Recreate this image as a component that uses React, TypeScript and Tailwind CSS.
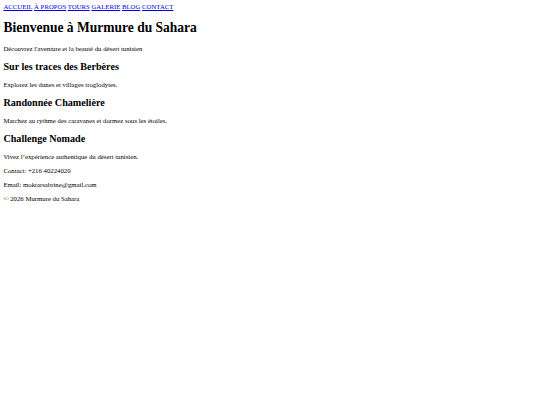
const links = ["ACCUEIL", "À PROPOS", "TOURS", "GALERIE", "BLOG", "CONTACT"];

const sections = [
  { title: "Sur les traces des Berbères", text: "Explorez les dunes et villages troglodytes." },
  { title: "Randonnée Chamelière", text: "Marchez au rythme des caravanes et dormez sous les étoiles." },
  { title: "Challenge Nomade", text: "Vivez l’expérience authentique du désert tunisien." },
];

export default function App() {
  return (
    <div className="min-h-[405px] bg-white text-black font-['Liberation_Serif','Times_New_Roman',serif] text-[6.76px] leading-[1.15]">
      <div className="p-[3.38px]">
        <nav>
          {links.map((l, i) => (
            <span key={l}>
              <a href="#" className="text-[#0000ee] underline">
                {l}
              </a>
              {i < links.length - 1 ? " " : ""}
            </span>
          ))}
        </nav>
        <h1 className="text-[13.52px] font-bold my-[9.06px]">Bienvenue à Murmure du Sahara</h1>
        <p className="my-[6.76px]">Découvrez l'aventure et la beauté du désert tunisien</p>
        {sections.map((s) => (
          <section key={s.title}>
            <h2 className="text-[10.14px] font-bold my-[8.25px]">{s.title}</h2>
            <p className="my-[6.76px]">{s.text}</p>
          </section>
        ))}
        <footer>
          <p className="my-[6.2px]">Contact: +216 40224020</p>
          <p className="my-[6.2px]">Email: moktarsabrine@gmail.com</p>
          <p className="my-[6.2px]">© 2026 Murmure du Sahara</p>
        </footer>
      </div>
    </div>
  );
}
